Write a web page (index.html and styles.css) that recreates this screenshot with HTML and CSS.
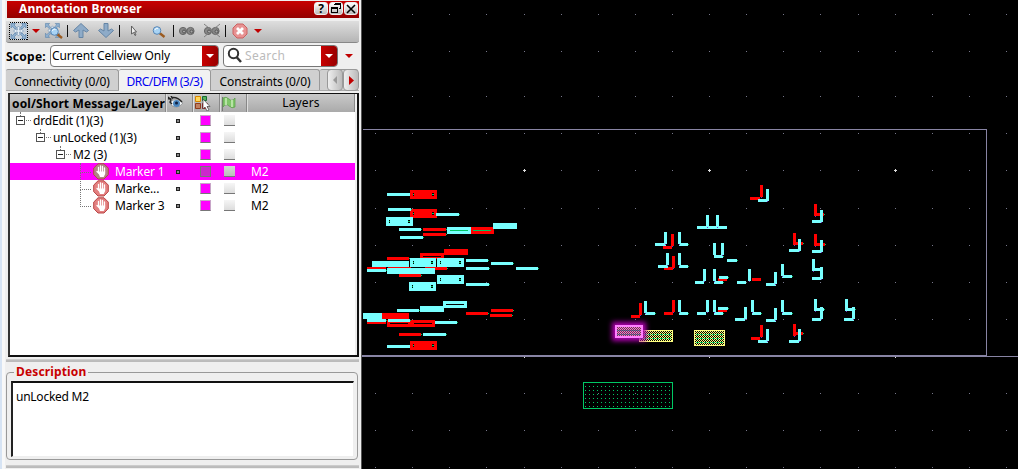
FILE: index.html
```html
<!DOCTYPE html>
<html lang="en">
<head>
<meta charset="utf-8">
<title>Annotation Browser</title>
<link rel="stylesheet" href="styles.css">
</head>
<body>
<div class="app">
<aside class="panel">
  <header class="title"><span>Annotation Browser</span>
    <div class="winbtns">
      <button class="wb">?</button>
      <button class="wb"><svg width="11" height="11" shape-rendering="crispEdges"><path d="M3.500 .5h6v5h-2M.5 4.500h6v5h-6zM3 1.500h7M0 5.500h7" fill="none" stroke="#000"/></svg></button>
      <button class="wb"><svg width="10" height="10"><path d="M1 1l8 8M9 1l-8 8" stroke="#000" stroke-width="1.600"/></svg></button>
    </div>
  </header>
  <div class="toolbar">
    <svg width="352" height="21" viewBox="6 21 352 21">
      <defs>
        <g id="fit"><path d="M.5 5V.5H5L3.500 2l2.500 2.500-1.500 1.500L2 3.500zM15.500 5V.5H11L12.500 2 10 4.500 11.500 6 14 3.500zM.5 11v4.500H5L3.500 14 6 11.500 4.500 10 2 12.500zM15.500 11v4.500H11l1.500-1.500-2.500-2.500 1.500-1.500 2.500 2.500z" fill="#8fb0d0" stroke="#5f86ad" stroke-width=".7"/><path d="M8 3l2 2.500H9V7h1.500V6L13 8l-2.500 2V9H9v1.500h1L8 13l-2-2.500h1V9H5.500v1L3 8l2.500-2v1H7V5.500H6z" fill="#e4edf5" stroke="#6c8fb2" stroke-width=".6"/></g>
        <g id="lens"><path d="M7 7l5 4" stroke="#9b5b20" stroke-width="2.400"/><circle cx="4.500" cy="4.500" r="3.800" fill="#a8d3f4" stroke="#5685b5"/><path d="M2.500 4a2 2 0 0 1 3-1.500" stroke="#fff" fill="none"/></g>
        <g id="eyes"><circle cx="4" cy="5" r="3.600" fill="#888" stroke="#666"/><circle cx="11.500" cy="5" r="3.600" fill="#888" stroke="#666"/><circle cx="5" cy="5.500" r="1.500" fill="#a5a5a5" stroke="#555"/><circle cx="12.500" cy="5.500" r="1.500" fill="#a5a5a5" stroke="#555"/></g>
      </defs>
      <rect x="9.500" y="22.500" width="18" height="17" fill="#c9d2db" stroke="#000" stroke-dasharray="1 1" shape-rendering="crispEdges"/>
      <use href="#fit" x="10.500" y="23"/>
      <path d="M32 29h8l-4 4zM254 29h8l-4 4z" fill="#c00000"/>
      <use href="#fit" transform="translate(45 23) scale(.93)"/><use href="#lens" x="50" y="27"/>
      <path d="M67.500 25v12M119.500 25v12M173.500 25v12M225.500 25v12" stroke="#111" shape-rendering="crispEdges"/>
      <path d="M73.500 30.500L81 23.500l7.500 7-2 1.500-3.500-2v7.500h-4V30l-3.500 2z" fill="#8eabc8" stroke="#6585a5"/>
      <path d="M98.500 30.500l7.500 7 7.500-7-2-1.500-3.500 2v-7.500h-4V31l-3.500-2z" fill="#8eabc8" stroke="#6585a5"/>
      <path d="M131.500 26v8l2-1.500 1.500 3 1-.5-1.500-3h2z" fill="#eee" stroke="#555" stroke-width=".9"/>
      <use href="#lens" x="152.500" y="26"/>
      <use href="#eyes" x="179" y="26"/><use href="#eyes" x="204" y="26"/>
      <path d="M204 24l16 13M220 24l-16 13" stroke="#808080"/>
      <path d="M237 24h6l4 4v6l-4 4h-6l-4-4v-6z" fill="#e79292" stroke="#cb6060"/><path d="M237 28l6 6M243 28l-6 6" stroke="#fff" stroke-width="2.800"/>
    </svg>
  </div>
  <div class="scope"><label>Scope:</label>
    <div class="combo"><span>Current Cellview Only</span><i class="drop"></i></div>
    <div class="combo search"><svg width="17" height="17"><circle cx="7.500" cy="6.500" r="4.700" fill="none" stroke="#333" stroke-width="2"/><path d="M10.500 10l4.500 5" stroke="#333" stroke-width="2.500"/></svg><span>Search</span><i class="drop"></i></div>
    <i class="tri"></i>
  </div>
  <nav class="tabs"><a class="tab t1">Connectivity (0/0)</a><a class="tab t2 on">DRC/DFM (3/3)</a><a class="tab t3">Constraints (0/0)</a><a class="tab t4"></a>
    <div class="arrows"><b><svg width="14" height="20"><path d="M9 6v8L5 10z" fill="#999"/></svg></b><b><svg width="14" height="20"><path d="M5 6v9l5-4.500z" fill="#c00000"/></svg></b></div>
  </nav>
  <div class="tree">
    <div class="head">
      <span class="h1"><span>ool/Short Message/Layer</span></span>
      <span class="hc h2"><svg width="16" height="14"><path d="M2 7q5-7 13 0-6 7-12 2z" fill="#f1f5f8" stroke="#777" stroke-width=".6"/><circle cx="8.500" cy="7.500" r="3.500" fill="#4b86be"/><circle cx="8.500" cy="7" r="1.500" fill="#102040"/><path d="M0 1l3 3-1 2 2 2M0 3q8-4 14 3M3 0l2 3" stroke="#222" fill="none" stroke-width="1.400"/></svg></span>
      <span class="hc h3"><svg width="17" height="16"><path d="M1.500 1.500h5v5h-5z" fill="#ffd75a" stroke="#d88600"/><path d="M8.500 1.500h4v4h-4z" fill="#55b35b" stroke="#176b31"/><path d="M1.500 8.500h5v5h-5z" fill="#c08060" stroke="#8e3b1b"/><path d="M8.500 8.500h5v5h-5z" fill="#de6060" stroke="#a02020"/><path d="M9 4v10l2-2 2 4 2-1-2-3.500h3z" fill="#fff" stroke="#444" stroke-width=".7"/></svg></span>
      <span class="hc h4"><svg width="15" height="15"><path d="M1.500 1v14" stroke="#777"/><path d="M2 2q3-2 6 1t6-1v9q-3 2-6-1t-6 1z" fill="#80c66a" stroke="#5a9c48" stroke-width=".7"/><path d="M5 2v7M11 4v7" stroke="#b8e3a6" stroke-width="2"/></svg></span>
      <span class="hc h5">Layers</span>
    </div>
    <div class="row"><span class="c1 l0"><i class="box"></i>drdEdit (1)(3)</span><i class="eye"></i><i class="sw"></i><i class="ck"></i></div>
    <div class="row"><span class="c1 l1"><i class="box"></i>unLocked (1)(3)</span><i class="eye"></i><i class="sw"></i><i class="ck"></i></div>
    <div class="row"><span class="c1 l2"><i class="box"></i>M2 (3)</span><i class="eye"></i><i class="sw"></i><i class="ck"></i></div>
    <div class="row sel"><span class="c1 l3"><svg class="stop" width="16" height="17"><use href="#hand"/></svg>Marker 1</span><i class="eye"></i><i class="sw"></i><i class="ck"></i><span class="lay">M2</span></div>
    <div class="row"><span class="c1 l3 more"><svg class="stop" width="16" height="17"><use href="#hand"/></svg>Marke...</span><i class="eye"></i><i class="sw"></i><i class="ck"></i><span class="lay">M2</span></div>
    <div class="row"><span class="c1 l3 more"><svg class="stop" width="16" height="17"><use href="#hand"/></svg>Marker 3</span><i class="eye"></i><i class="sw"></i><i class="ck"></i><span class="lay">M2</span></div>
  </div>
  <div class="split"></div>
  <fieldset class="desc"><legend>Description</legend><div class="text">unLocked M2</div></fieldset>
  <div class="split foot"></div>
</aside>
<main class="view"><svg id="layout" width="656" height="469" viewBox="362 0 656 469" shape-rendering="crispEdges">
  <defs>
    <symbol id="hand" viewBox="0 0 16 17"><path d="M5 .8h6l4.300 4.300v6.500L11 16H5L.7 11.600V5.100z" fill="currentColor" stroke="#b94444"/><path d="M4 8.500L5.500 10V4.500M7.500 9V3M9.500 9V3.500M11.500 9V5" stroke="#fff" stroke-width="1.300" fill="none" stroke-linecap="round"/><path d="M4.800 8.500h7.400v2.500l-1.500 3H7z" fill="#fff"/></symbol>
    <pattern id="mesh" width="4" height="4" patternUnits="userSpaceOnUse"><path d="M1 0h1v1H1zM3 0h1v1H3zM0 1h1v1H0zM2 1h1v1H2zM0 3h1v1H0zM2 3h1v1H2z" fill="#ffff80"/><path d="M0 2h3v1H0z" fill="#00b85c"/><path d="M3 2h1v1H3z" fill="#ffff80"/></pattern>
    <filter id="glow" x="-50%" y="-100%" width="200%" height="300%"><feGaussianBlur stdDeviation="2.500"/></filter>
  </defs>
</svg></main>
</div>
<script src="layout.js"></script>
</body>
</html>
```
FILE: styles.css
```css
*{box-sizing:border-box}
body{margin:0;width:1018px;height:469px;overflow:hidden;background:#000;font:12px/17px "Noto Sans",sans-serif;color:#000}
.app{display:flex;height:469px}
.panel{width:362px;height:469px;flex:none;display:flex;flex-direction:column;background:#efefef;border-left:2px solid #d7e4f4;border-right:1px solid #555;padding:1px 2px 0 4px;box-shadow:inset 3px 0 #f8f8f8}
.view{flex:1;background:#000}
.view svg{display:block}
.title{height:17px;margin-left:1px;display:flex;justify-content:space-between;color:#fff;font-weight:bold;line-height:16px;padding-left:12px;background:linear-gradient(#c80000,#940000)}
.title span{letter-spacing:.14px}
.winbtns{display:flex;gap:1px;margin-right:1px}
.wb{width:14px;height:13px;padding:0;margin-top:1px;border:1px solid #eee;border-radius:3px;background:linear-gradient(#fff,#bbb);font:bold 12px/10px "Noto Sans",sans-serif;display:flex;align-items:center;justify-content:center}
.toolbar{height:22px;margin-top:3px;background:linear-gradient(#dedede,#b5b5b5);border-bottom:1px solid #888;border-radius:0 0 3px 3px}
.toolbar svg{display:block}
.scope{height:24px;display:flex;align-items:center;padding-top:2px}
.scope label{font-weight:bold;width:44px;letter-spacing:.25px}
.combo{display:flex;height:22px;width:169px;border:1px solid #777;border-radius:4px;background:#fff;justify-content:space-between;line-height:20px;padding-left:1px;overflow:hidden}
.combo span{letter-spacing:-.15px}
.search{width:115px;margin-left:4px;color:#bbb;justify-content:flex-start}
.search svg{margin:1px 2px 0 1px}
.combo.search span{flex:1;letter-spacing:.4px}
.drop{width:16px;background:linear-gradient(90deg,#c80000,#980000);display:flex;align-items:center;justify-content:center}
.drop:after,.tri{content:"";width:0;border:4px solid transparent;border-top-color:#fff;border-bottom:0}
.tri{border-top-color:#c00000;margin-left:7px}
.tabs{display:flex;height:22px;margin-top:2px;line-height:24px;border-bottom:1px solid #aaa;position:relative;letter-spacing:-.12px}
.tab{background:#d0d0d0;border:1px solid #999;border-width:1px 1px 0 0;border-radius:2px 3px 0 0;height:21px;text-align:center;white-space:nowrap}
.t1{width:113px}.t2{width:92px}.t3{width:109px}.t4{width:38px}
.tab.on{background:#f2f2f2;color:#0000f0;height:22px;line-height:23px;letter-spacing:-.5px}
.arrows{position:absolute;right:0;top:0;display:flex}
.arrows b{width:16px;height:22px;border:1px solid #999;border-radius:4px;background:linear-gradient(90deg,#eee,#bbb)}
.arrows svg{display:block}
.tree{height:264px;margin:2px 0 0 2px;border:2px solid #222;border-color:#111 #111 #111 #333;border-top-width:1px;background:#fff;box-shadow:inset -2px 0 #eee}
.head{display:flex;height:18px;margin-right:2px;background:linear-gradient(#c9c9c9,#aaa)}
.h1{width:156px;font-weight:bold;overflow:hidden;white-space:nowrap;padding-left:2px;line-height:20px;border-right:1px solid #888;display:flex;letter-spacing:.13px}
.hc{border-right:1px solid #888;border-left:1px solid #ddd;line-height:20px;display:flex;align-items:center}
.h2{width:27px;padding-left:1px}.h3{width:27px}.h4{width:27px}.h5{flex:1;justify-content:center;letter-spacing:.15px}
.row{display:flex;height:17px;align-items:center;margin-right:2px}
.c1{width:156px;display:flex;align-items:center;white-space:nowrap;letter-spacing:-.15px}
.l0{padding-left:6px}.l1{padding-left:26px}.l2{padding-left:46px}
.box{width:9px;height:9px;border:1px solid #555;margin-right:8px;background:linear-gradient(#222,#222) center/5px 1px no-repeat;position:relative}
.box:before{content:"";position:absolute;left:3px;top:-5px;height:4px;border-left:1px dotted #777}
.box:after{content:"";position:absolute;left:9px;top:3px;width:5px;border-top:1px dotted #777}
.l3{padding-left:83px;position:relative}
.l3:before{content:"";position:absolute;left:70px;top:0;width:10px;height:9px;border:1px dotted #777;border-width:0 0 1px 1px}
.more:before{top:-8px;height:17px}
.stop{margin-right:6px;color:#e38080;flex:none}
.sel{background:#f0f;color:#fff}.sel .stop{color:#b08484}
.eye{width:4px;height:4px;border:1px solid #222;background:#888;margin-left:10px}
.sw{width:11px;height:11px;margin-left:20px;background:#f0f;border:1px solid #c8a5c8;border-bottom-color:#777}
.sel .sw{background:#cc28cc;border-color:#777}
.ck{width:11px;height:11px;margin-left:13px;background:linear-gradient(#f6f6f6,#ddd);border-bottom:1px solid #777}
.sel .ck{background:linear-gradient(#d6d6d6,#bbb)}
.lay{margin-left:16px;letter-spacing:-.15px}
.split{height:3px;margin-top:2px;border-top:1px solid #ccc;border-bottom:1px solid #bbb;background:#bdbdbd}
.desc{height:95px;margin:3px 1px 0 0;padding:2px 3px 1px 4px;border:1px solid #999;border-radius:4px;min-width:0}
.desc legend{font-weight:bold;color:#c80000;padding:0 2px;margin-left:3px;line-height:14px;height:14px;letter-spacing:.15px}
.text{height:76px;background:#fff;border:1px solid #eee;border-top:2px solid #111;border-left:2px solid #222;padding:5px 3px;letter-spacing:-.25px}
.foot{margin-top:5px}
```
FILE: layout.js
```js
const svg = document.getElementById("layout");
function rect(x, y, w, h, fill, extra = {}) {
  const r = document.createElementNS("http://www.w3.org/2000/svg", "rect");
  for (const [k, v] of Object.entries({ x, y, width: w, height: h, fill, ...extra })) r.setAttribute(k, v);
  svg.append(r);
}
const RED = "#ff0000", CYAN = "#78ffff", GREEN = "#00c864", LINE = "#8884a4";

// grid
const gx = [375,412,449,486,524,561,598,635,672,709,746,783,820,858,895,932,969,1006];
for (const y of [14,51,96,133,170,208,245,282,319,393,430,467])
  for (const x of gx) rect(x, y, 1, 1, "#77778a");
for (const x of [524,709,895]) { rect(x-1,170,3,1,"#ddd"); rect(x,169,1,3,"#ddd"); rect(x,357,1,1,"#ddd"); }

// cell outline
rect(363,129,624,1,LINE); rect(986,129,1,227,LINE); rect(362,355,625,1,LINE); rect(362,356,656,1,LINE);

// horizontal bars: x, y, w, h
const redBars = [[410,190,27,9],[410,209,27,9],[423,228,23,3],[423,233,23,3],[471,227,23,7],[444,249,24,6],[420,253,24,5],[436,257,4,2],[387,257,22,3],[367,267,19,2],[388,267,23,2],[425,267,22,3],[399,274,22,3],[466,312,22,3],[491,309,22,3],[490,314,22,3],[382,313,27,6],[367,322,19,2],[387,320,48,7],[399,333,22,3],[410,341,27,9]];
const cyanBars = [[387,193,23,3],[388,208,23,3],[436,213,23,3],[386,217,27,9],[399,228,22,3],[400,236,23,3],[447,227,24,7],[493,223,24,6],[372,261,37,6],[410,258,26,9],[437,258,27,9],[466,259,22,3],[491,262,22,3],[466,267,23,3],[516,267,22,3],[367,269,19,3],[387,268,48,6],[437,275,27,9],[466,283,23,3],[409,282,27,9],[443,301,24,7],[420,306,24,6],[397,309,22,3],[363,313,19,6],[367,319,19,3],[388,319,22,3],[435,321,22,3],[423,333,23,3],[387,345,23,3]];
for (const [list, color] of [[redBars, RED], [cyanBars, CYAN]])
  for (const [x,y,w,h] of list) {
    rect(x,y,w,h,color);
    if (h === 3 && w > 9 && !(x+w === 410 && (y === 193 || y === 345))) rect(x+w,y+1,1,1,GREEN);
    if (h === 9) for (const px of [x+3, x+w-5]) { rect(px,y+3,px===x+3?1:2,3,"#000"); rect(px,y+4,px===x+3?1:2,1,GREEN); }
  }
for (const [x,y,c] of [[450,230,GREEN],[473,230,GREEN],[423,256,"#000"],[446,304,"#000"],[390,323,"#000"],[414,323,"#000"]]) rect(x,y,18,1,c);

// elbows: stem x, stem y, foot x, foot y, foot width
const redElbows = [[671,234,663,246,9],[672,256,664,267,9],[639,303,631,315,9],[672,300,664,312,9],[760,185,750,197,10],[814,204,814,213,10],[793,233,794,242,9],[814,234,814,243,11],[760,325,751,337,9],[793,324,794,332,9]];
const cyanElbows = [[706,215,697,226,14],[716,215,708,226,19],[664,232,655,243,11],[678,232,679,243,9],[666,253,658,265,10],[678,253,679,265,9],[713,243,714,255,9],[721,243,714,255,9],[703,269,695,281,9],[713,269,714,281,9],[644,301,645,312,10],[678,300,679,312,9],[706,300,697,312,9],[713,300,714,312,9],[766,189,758,199,10],[820,210,812,220,10],[798,239,789,249,11],[820,240,812,250,10],[812,259,812,268,10],[820,267,812,277,10],[748,269,737,281,9],[774,272,766,283,10],[781,264,782,275,10],[744,307,735,318,10],[751,300,752,312,9],[774,308,766,319,10],[781,300,782,312,10],[814,299,814,308,10],[820,307,812,318,9],[845,299,845,308,10],[852,307,844,318,10],[766,329,758,340,10],[798,329,789,340,10]];
for (const [x,y,w] of [[718,278,9],[718,309,9],[752,278,9]]) rect(x,y,w,3,RED);
for (const [x,y,w] of [[719,276,9],[718,307,10],[727,259,10]]) { rect(x,y,w,3,CYAN); rect(x+w,y+1,1,1,GREEN); }
for (const [list, color] of [[redElbows, RED], [cyanElbows, CYAN]])
  for (const [sx,sy,fx,fy,fw] of list) {
    rect(sx,sy,3,12,color); rect(fx,fy,fw,3,color);
    if (fx >= sx) rect(fx+fw,fy+1,1,1,GREEN);
    rect(sx+1,sy+12,1,1,"#7030c0");
  }

// vias and wells
function frame(x,y,w,h,stroke,fill) { rect(x+.5,y+.5,w-1,h-1,fill,{stroke}); }
frame(639,330,34,12,"#ffff80","url(#mesh)");
frame(694,330,31,16,"#ffff80","url(#mesh)");
frame(583,382,90,27,GREEN,"none");
for (let y = 386; y < 408; y += 4) for (let x = 585; x < 671; x += 4) rect(x,y,1,1,GREEN);
rect(612,322,34,19,"#b000b0",{filter:"url(#glow)"});
rect(617,327,24,9,"#752368");
for (let y = 327; y < 336; y++)
  for (let x = 617 + y % 2; x < 641; x += 2) rect(x,y,1,1,y % 4 === 2 ? "#508c9c" : "#e890b8");
rect(616,326,26,11,"none",{stroke:"#ff80ff","stroke-width":2});
```
